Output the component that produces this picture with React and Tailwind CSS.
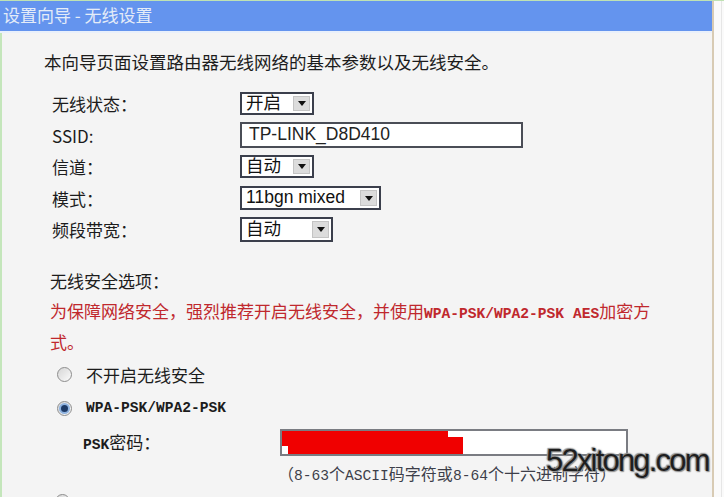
import React from 'react';

const cjk = { fontFamily: '"Noto Sans CJK SC", "Liberation Sans", sans-serif' };
const mono = { fontFamily: '"Liberation Mono", "Noto Sans CJK SC", monospace' };

const Arrow = () => (
	<div className="h-full w-[21px] flex items-center justify-center p-[2px]">
		<div className="w-full h-full bg-[#dcdcdc] border border-[#c4c4c4] flex items-center justify-center">
			<div className="w-0 h-0 border-l-[4px] border-r-[4px] border-t-[5px] border-l-transparent border-r-transparent border-t-[#111]"></div>
		</div>
	</div>
);

const Select = ({ label, width, height }) => (
	<div className={`${width} ${height} flex items-center border-2 border-[#3b3f4c] bg-white`}>
		<span className="flex-1 pl-[4px] text-[17.5px] leading-none text-[#111] whitespace-nowrap" style={{ fontFamily: '"Liberation Sans", "Noto Sans CJK SC", sans-serif' }}>{label}</span>
		<Arrow />
	</div>
);

const Row = ({ label, children, className }) => (
	<div className={`flex items-center ${className}`}>
		<span className="w-[238px] pl-[50px] text-[17px] text-[#1c1c1c] leading-none">{label}</span>
		{children}
	</div>
);

const Radio = ({ checked }) => (
	<div className="w-[15px] h-[15px] shrink-0 rounded-full border border-[#8d8d8d] bg-gradient-to-br from-[#d6d6d6] to-[#fbfbfb] flex items-center justify-center">
		{checked && <div className="w-[7px] h-[7px] rounded-full bg-[#1d3a66] ring-2 ring-[#8fb3e0]"></div>}
	</div>
);

export default function App() {
	return (
		<div className="w-[724px] h-[497px] overflow-hidden flex border-t border-[#bfe2b3] relative" style={cjk}>
			<div className="w-[712px] h-full shrink-0 flex flex-col overflow-hidden">
				<header className="relative z-10 block shrink-0 w-[712px] h-[30px] bg-[#6494ee] pl-[3px] pt-[4px] text-[17px] leading-[20px] text-[#e4ecf8]">
					设置向导 - 无线设置
				</header>
				<div className="relative z-10 shrink-0 h-[2px] bg-[#e9f0fb]"></div>
				<div className="flex-1 min-h-0 overflow-hidden bg-[#f4f4f4] border-l-2 border-[#c4e6bb] flex flex-col *:shrink-0">
					<p className="mt-[19px] pl-[42px] text-[17.5px] leading-[20px] text-[#1c1c1c]">本向导页面设置路由器无线网络的基本参数以及无线安全。</p>

					<Row label="无线状态：" className="mt-[20px] h-[23px]">
						<Select label="开启" width="w-[74px]" height="h-[23px]" />
					</Row>
					<Row label="SSID:" className="mt-[7px] h-[26px]">
						<div className="w-[283px] h-[26px] border-2 border-[#4a4d56] bg-white flex items-center pl-[7px]">
							<span className="text-[17.5px] text-[#222] leading-none" style={{ fontFamily: '"Liberation Sans", sans-serif' }}>TP-LINK_D8D410</span>
						</div>
					</Row>
					<Row label="信道：" className="mt-[7px] h-[23px]">
						<Select label="自动" width="w-[74px]" height="h-[23px]" />
					</Row>
					<Row label="模式：" className="mt-[8px] h-[24px]">
						<Select label="11bgn mixed" width="w-[141px]" height="h-[24px]" />
					</Row>
					<Row label="频段带宽：" className="mt-[7px] h-[25px]">
						<Select label="自动" width="w-[93px]" height="h-[25px]" />
					</Row>

					<p className="mt-[29px] pl-[48px] text-[17px] leading-[20px] text-[#1c1c1c]">无线安全选项：</p>
					<div className="mt-[6px] pl-[48px] text-[17px] leading-[28px] text-[#c0282d]">
						<div className="whitespace-nowrap">为保障网络安全，强烈推荐开启无线安全，并使用<span className="text-[14.6px] font-bold" style={mono}>WPA-PSK/WPA2-PSK AES</span>加密方</div>
						<div>式。</div>
					</div>

					<div className="mt-[6px] h-[24px] flex items-center pl-[55px] gap-[14px]">
						<Radio />
						<span className="text-[17px] text-[#1c1c1c] leading-none">不开启无线安全</span>
					</div>
					<div className="mt-[10px] h-[24px] flex items-center pl-[55px] gap-[14px]">
						<Radio checked />
						<span className="text-[14.6px] text-[#1c1c1c] leading-none font-bold" style={mono}>WPA-PSK/WPA2-PSK</span>
					</div>
					<div className="mt-[9px] h-[27px] flex items-center">
						<span className="w-[278px] pl-[81px] text-[17px] text-[#1c1c1c] leading-none"><span className="font-bold text-[14.6px]" style={mono}>PSK</span>密码：</span>
						<div className="relative w-[348px] h-[27px] border-2 border-[#7a7c82] bg-white">
							<div className="absolute left-0 top-0 w-[166px] h-[8px] bg-[#f00000]"></div>
							<div className="absolute left-[6px] top-[6px] w-[175px] h-[17px] bg-[#f00000]"></div>
							<div className="absolute left-0 top-[6px] w-[8px] h-[9px] bg-[#f00000]"></div>
						</div>
					</div>
					<div className="mt-[7px] h-[20px] pl-[276px] text-[16px] leading-[20px] text-[#3d3f4a] whitespace-nowrap">（<span style={mono} className="text-[14.6px]">8-63</span>个<span style={mono} className="text-[14.6px]">ASCII</span>码字符或<span style={mono} className="text-[14.6px]">8-64</span>个十六进制字符）</div>
					<div className="mt-[11px] h-[24px] flex items-start pl-[53px]">
						<Radio />
					</div>
				</div>
			</div>
			<div className="w-[2px] shrink-0 bg-[#d8cbb4]"></div>
			<div className="flex-1 bg-[#fafafa] flex justify-end">
				<div className="w-[1px] bg-[#e6e6e6] mr-[2px]"></div>
			</div>

			<div
				className="absolute z-20 left-[546px] top-[444px] text-[31px] leading-none tracking-[-1.8px] text-[#1e1e1e] whitespace-nowrap"
				style={{ fontFamily: '"Liberation Sans", sans-serif', textShadow: '0 0 2px #9a9a9a, 0 0 2px #9a9a9a, 1px 1px 1px #8a8a8a, -1px -1px 1px #8a8a8a' }}
			>
				52xitong.com
			</div>
		</div>
	);
}
